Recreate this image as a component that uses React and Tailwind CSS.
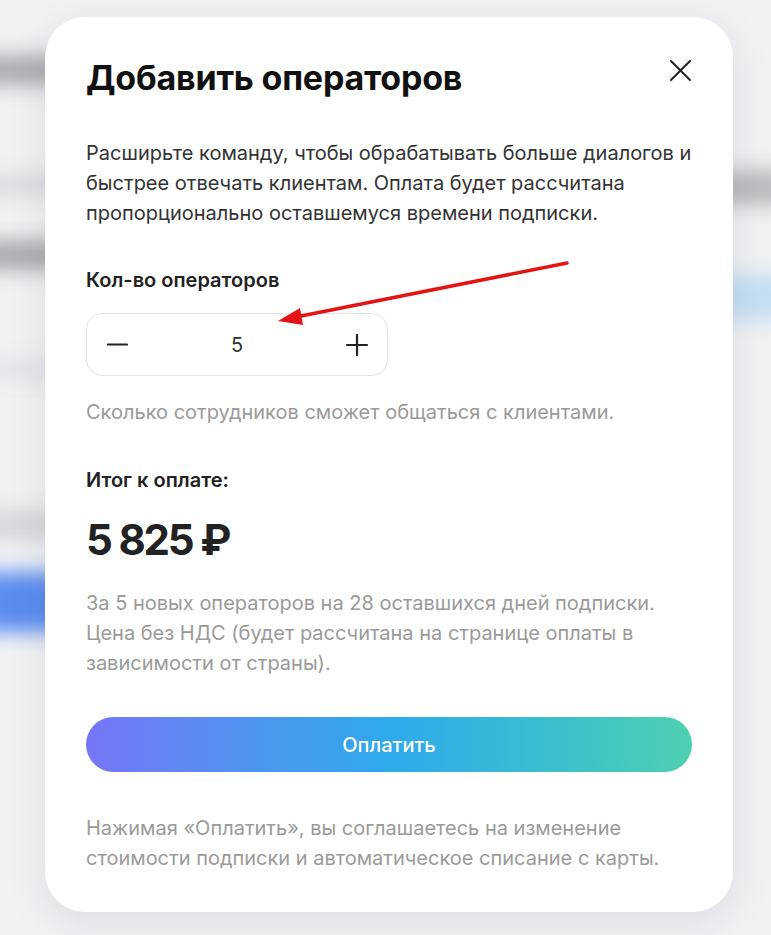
import React from "react";

function Blur({ className }) {
  return <div className={"rounded blur-[10px] " + className} />;
}

export default function App() {
  return (
    <div
      className="relative w-[771px] h-[935px] overflow-hidden bg-[#f1f2f4]"
      style={{ fontFamily: "Inter, 'Noto Sans', sans-serif" }}
    >
      {/* blurred page behind the modal overlay */}
      <div className="absolute inset-0 flex justify-between">
        <div className="flex flex-col w-[100px] ml-[-20px]">
          <Blur className="mt-[55px] h-[30px] w-[120px] bg-[#a9abaf]" />
          <Blur className="mt-[90px] h-[20px] w-[90px] bg-[#d7d9dc]" />
          <Blur className="mt-[45px] h-[30px] w-[110px] bg-[#a8aaae]" />
          <Blur className="mt-[90px] h-[20px] w-[90px] bg-[#e1e3e6]" />
          <Blur className="mt-[130px] h-[30px] w-[90px] bg-[#d5d7da]" />
          <Blur className="mt-[32px] h-[60px] w-[110px] bg-[#5b8cf0]" />
        </div>
        <div className="flex flex-col w-[100px] mr-[-30px]">
          <Blur className="mt-[170px] h-[35px] w-[100px] bg-[#b9babd]" />
          <Blur className="mt-[70px] h-[45px] w-[100px] bg-[#c4def4]" />
        </div>
      </div>

      <div className="relative pl-[45px] pt-[17px]">
        <div className="w-[688px] h-[895px] rounded-[40px] bg-white shadow-[0_10px_40px_rgba(30,40,60,0.10)] px-[41px] pt-[40px] flex flex-col">
          <div className="flex items-start justify-between">
            <h1 className="text-[34px] leading-[42px] font-bold text-[#111] tracking-[-0.2px]">
              Добавить операторов
            </h1>
            <button className="mt-[2px] mr-[1px] w-[22px] h-[22px] flex items-center justify-center">
              <svg width="21" height="21" viewBox="0 0 21 21" fill="none">
                <path d="M1 1L20 20M20 1L1 20" stroke="#222" strokeWidth="2" strokeLinecap="round" />
              </svg>
            </button>
          </div>

          <p className="mt-[39px] text-[20px] leading-[30px] text-[#333] whitespace-nowrap">
            Расширьте команду, чтобы обрабатывать больше диалогов и
            <br />
            быстрее отвечать клиентам. Оплата будет рассчитана
            <br />
            пропорционально оставшемуся времени подписки.
          </p>

          <div className="mt-[38px] text-[20px] leading-[28px] font-semibold text-[#222]">
            Кол-во операторов
          </div>

          <div className="mt-[19px] w-[302px] h-[63px] rounded-[16px] border border-[#e3e3e3] flex items-center justify-between pl-[20px] pr-[19px]">
            <svg width="21" height="21" viewBox="0 0 21 21" fill="none">
              <path d="M1 10.5H20" stroke="#222" strokeWidth="2.2" strokeLinecap="round" />
            </svg>
            <span className="text-[20px] text-[#333]">5</span>
            <svg width="22" height="22" viewBox="0 0 22 22" fill="none">
              <path d="M1 11H21M11 1V21" stroke="#222" strokeWidth="2.2" strokeLinecap="round" />
            </svg>
          </div>

          <p className="mt-[21px] text-[20px] leading-[30px] text-[#9a9a9a]">
            Сколько сотрудников сможет общаться с клиентами.
          </p>

          <div className="mt-[39px] text-[20px] leading-[28px] font-semibold text-[#222]">
            Итог к оплате:
          </div>

          <div className="mt-[20px] text-[42px] leading-[52px] font-bold text-[#222] tracking-[-2.2px]">
            5 825 ₽
          </div>

          <p className="mt-[22px] text-[20px] leading-[30px] text-[#9a9a9a] whitespace-nowrap">
            За 5 новых операторов на 28 оставшихся дней подписки.
            <br />
            Цена без НДС (будет рассчитана на странице оплаты в
            <br />
            зависимости от страны).
          </p>

          <button className="mt-[39px] w-full h-[55px] rounded-full bg-[linear-gradient(90deg,#7775f6_0%,#4a98ef_30%,#2ea9ec_50%,#3bbdd0_75%,#4ed0b0_100%)] text-white text-[20px] font-medium">
            Оплатить
          </button>

          <p className="mt-[41px] text-[20px] leading-[30px] text-[#9a9a9a] whitespace-nowrap">
            Нажимая «Оплатить», вы соглашаетесь на изменение
            <br />
            стоимости подписки и автоматическое списание с карты.
          </p>
        </div>
      </div>

      {/* red annotation arrow */}
      <svg className="absolute left-0 top-0 pointer-events-none" width="771" height="935">
        <line x1="567" y1="263" x2="296" y2="317" stroke="#e31414" strokeWidth="3.5" strokeLinecap="round" />
        <polygon points="278,321 300,308 303,325" fill="#e31414" />
      </svg>
    </div>
  );
}
